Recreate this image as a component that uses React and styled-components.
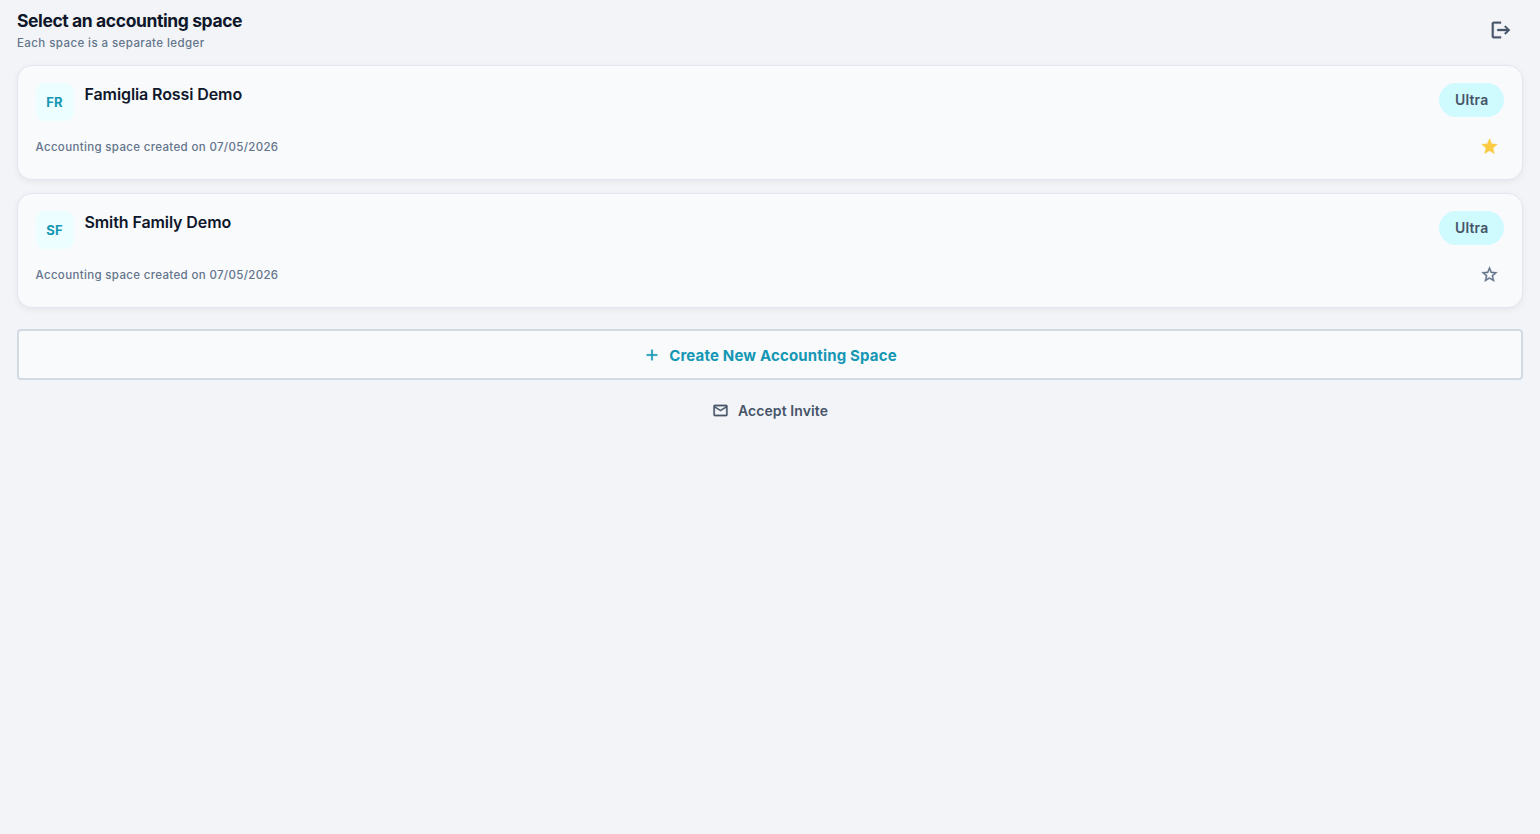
import React, { useState } from 'react'
import styled, { createGlobalStyle } from 'styled-components';

const icons = {
    logout: 'M17 7L15.59 8.41L18.17 11H8V13H18.17L15.59 15.58L17 17L22 12M4 5H12V3H4C2.9 3 2 3.9 2 5V19C2 20.1 2.9 21 4 21H12V19H4V5Z',
    star: 'M12,17.27L18.18,21L16.54,13.97L22,9.24L14.81,8.62L12,2L9.19,8.62L2,9.24L7.45,13.97L5.82,21L12,17.27Z',
    starOutline: 'M12,15.39L8.24,17.66L9.23,13.38L5.91,10.5L10.29,10.13L12,6.09L13.71,10.13L18.09,10.5L14.77,13.38L15.76,17.66M22,9.24L14.81,8.63L12,2L9.19,8.63L2,9.24L7.45,13.97L5.82,21L12,17.27L18.18,21L16.54,13.97L22,9.24Z',
    plus: 'M19,13H13V19H11V13H5V11H11V5H13V11H19V13Z',
    email: 'M22 6C22 4.9 21.1 4 20 4H4C2.9 4 2 4.9 2 6V18C2 19.1 2.9 20 4 20H20C21.1 20 22 19.1 22 18V6M20 6L12 11L4 6H20M20 18H4V8L12 13L20 8V18Z',
}

const spaces = [
    { id: 1, initials: 'FR', name: 'Famiglia Rossi Demo', plan: 'Ultra', created: '07/05/2026' },
    { id: 2, initials: 'SF', name: 'Smith Family Demo', plan: 'Ultra', created: '07/05/2026' },
]

function Icon({ name, size }) {
    return (
        <svg width={size} height={size} viewBox="0 0 24 24" fill="currentColor" stroke="currentColor" strokeWidth="0.4" aria-hidden="true">
            <path d={icons[name]} />
        </svg>
    )
}

function SpaceCard({ space, favorite, onFavorite }) {
    return (
        <Card>
            <CardTop>
                <Avatar>{space.initials}</Avatar>
                <SpaceName>{space.name}</SpaceName>
                <PlanBadge>{space.plan}</PlanBadge>
            </CardTop>
            <CardBottom>
                <Created>Accounting space created on {space.created}</Created>
                <StarButton $active={favorite} onClick={onFavorite} aria-label="Favorite">
                    <Icon name={favorite ? 'star' : 'starOutline'} size={19} />
                </StarButton>
            </CardBottom>
        </Card>
    )
}

function App() {
    const [favorite, setFavorite] = useState(1);

    return (
        <Container>
            <GlobalStyle />
            <Header>
                <div>
                    <Title>Select an accounting space</Title>
                    <Subtitle>Each space is a separate ledger</Subtitle>
                </div>
                <LogoutButton aria-label="Log out">
                    <Icon name="logout" size={22} />
                </LogoutButton>
            </Header>
            <List>
                {
                    spaces.map((space) => (
                        <SpaceCard
                            key={space.id}
                            space={space}
                            favorite={favorite === space.id}
                            onFavorite={() => setFavorite(space.id)}
                        />
                    ))
                }
            </List>
            <CreateButton>
                <Icon name="plus" size={18} />
                <span>Create New Accounting Space</span>
            </CreateButton>
            <InviteButton>
                <Icon name="email" size={17} />
                <span>Accept Invite</span>
            </InviteButton>
        </Container>
    )
}

export default App;

const GlobalStyle = createGlobalStyle`
    * {
        box-sizing: border-box;
    }

    body {
        margin: 0;
        background-color: #f2f4f8;
        font-family: Inter, sans-serif;
    }

    button {
        border: none;
        background: none;
        padding: 0;
        font-family: inherit;
        cursor: pointer;
    }

    svg {
        display: block;
        flex-shrink: 0;
    }
`;

const Container = styled.div`
    display: flex;
    flex-direction: column;
    min-height: 100vh;
    padding: 0 17px;
`;

const Header = styled.header`
    display: flex;
    justify-content: space-between;
    height: 65px;
    padding-top: 8px;
`;

const Title = styled.h1`
    margin: 0;
    color: #0f172a;
    font-size: 17.5px;
    font-weight: 700;
    line-height: 26px;
    letter-spacing: -0.4px;
`;

const Subtitle = styled.p`
    margin: 0;
    color: #64748b;
    font-size: 11.5px;
    font-weight: 500;
    line-height: 19px;
    letter-spacing: 0.42px;
`;

const LogoutButton = styled.button`
    display: flex;
    align-items: center;
    justify-content: center;
    width: 44px;
    height: 44px;
    color: #475569;
`;

const List = styled.div`
    display: flex;
    flex-direction: column;
    gap: 13px;
`;

const Card = styled.div`
    display: flex;
    flex-direction: column;
    height: 115px;
    padding: 17px 18px 17px 17.5px;
    border: 1px solid #e2e8f0;
    border-radius: 15px;
    background-color: #f8fafc;
    box-shadow: 0 2px 6px rgba(15, 23, 42, 0.06);
`;

const CardTop = styled.div`
    display: flex;
    align-items: flex-start;
`;

const Avatar = styled.div`
    display: flex;
    align-items: center;
    justify-content: center;
    width: 38px;
    height: 38px;
    border-radius: 9px;
    background-color: #ecfeff;
    color: #1597b4;
    font-size: 13px;
    font-weight: 700;
    letter-spacing: 0.2px;
`;

const SpaceName = styled.h2`
    flex: 1;
    margin: 0 0 0 11px;
    color: #0f172a;
    font-size: 16px;
    font-weight: 600;
    line-height: 22px;
    letter-spacing: -0.1px;
`;

const PlanBadge = styled.span`
    padding: 0 15.5px;
    border-radius: 17px;
    background-color: #cffafe;
    color: #475569;
    font-size: 14px;
    font-weight: 600;
    line-height: 34px;
    letter-spacing: 0.2px;
`;

const CardBottom = styled.div`
    display: flex;
    align-items: center;
    justify-content: space-between;
    height: 30px;
    margin-top: 10px;
`;

const Created = styled.span`
    padding-top: 2px;
    color: #64748b;
    font-size: 11.5px;
    font-weight: 450;
    letter-spacing: 0.34px;
`;

const StarButton = styled.button`
    display: flex;
    align-items: center;
    justify-content: center;
    width: 30px;
    height: 30px;
    color: ${(props) => (props.$active ? '#fbcb43' : '#64748b')};
`;

const CreateButton = styled.button`
    display: flex;
    align-items: center;
    justify-content: center;
    gap: 8px;
    height: 51px;
    margin-top: 21px;
    border: 2px solid #d2dae4;
    border-radius: 4px;
    background-color: #f8fafc;
    color: #1597b4;
    font-size: 15px;
    font-weight: 700;
    letter-spacing: 0.17px;

    span {
        padding-top: 1px;
    }
`;

const InviteButton = styled.button`
    display: flex;
    align-items: center;
    justify-content: center;
    align-self: center;
    gap: 9px;
    height: 38px;
    margin-top: 11px;
    color: #475569;
    font-size: 14px;
    font-weight: 600;
    letter-spacing: 0.1px;
`;
